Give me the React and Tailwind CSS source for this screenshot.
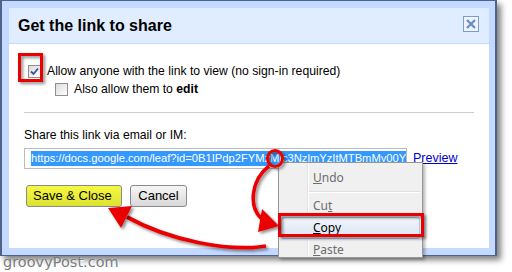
import React from 'react'

const URL_TEXT = 'https://docs.google.com/leaf?id=0B1IPdp2FYMzMjc3NzlmYzItMTBmMy00Y'

function Checkbox({ checked }) {
  return (
    <span className="w-[13px] h-[13px] shrink-0 border border-[#8f8f8f] bg-gradient-to-br from-[#dcdcdc] to-[#ffffff] flex items-center justify-center">
      {checked && (
        <svg width="9" height="9" viewBox="0 0 9 9">
          <path d="M1 4.5 L3.5 7 L8 1.5" fill="none" stroke="#3550a0" strokeWidth="1.8" />
        </svg>
      )}
    </span>
  )
}

function MenuItem({ label, u, active }) {
  const i = label.indexOf(u)
  return (
    <div
      className={`h-[22px] mx-[2px] pl-[31px] flex items-center border rounded-[3px] ${
        active
          ? 'bg-gradient-to-b from-[#f1f5fb] to-[#dae5f3] border-[#a9c6ea] text-black'
          : 'border-transparent text-[#6d6d6d]'
      }`}
    >
      {label.slice(0, i)}
      <span className="underline">{u}</span>
      {label.slice(i + 1)}
    </div>
  )
}

export default function App() {
  return (
    <div className="relative w-[512px] h-[272px] bg-white overflow-hidden font-['Liberation_Sans',Arial,sans-serif] text-black">
      {/* dialog frame */}
      <div className="w-[497px] h-[256px] bg-[#c3d9ff] border-x-2 border-t border-b border-[#4f6289] pt-[7px] pb-[7px] pl-[7px] pr-[6px] shadow-[4px_4px_6px_rgba(0,0,0,0.5)]">
        <div className="h-full bg-white flex flex-col">
          {/* header */}
          <div className="h-[36px] shrink-0 bg-[#e0ecff] border-b border-[#c3d9ff] flex justify-between pl-[9px] pr-[10px]">
            <div className="text-[16px] font-bold leading-[36px]">Get the link to share</div>
            <div className="mt-[8px] w-[16px] h-[16px] border border-[#7f9dc4] bg-[#eef4fd] flex items-center justify-center">
              <svg width="12" height="12" viewBox="0 0 12 12">
                <path d="M2 2 L10 10 M10 2 L2 10" stroke="#6d8fc0" strokeWidth="2.4" />
              </svg>
            </div>
          </div>

          {/* body */}
          <div className="flex flex-col px-[15px] pt-[19px] text-[12.2px]">
            <div className="h-[16px] flex items-center pl-[4px] gap-[6px]">
              <Checkbox checked />
              <span>Allow anyone with the link to view (no sign-in required)</span>
            </div>
            <div className="h-[16px] mt-[2px] flex items-center pl-[31px] gap-[6px]">
              <Checkbox />
              <span>
                Also allow them to <b>edit</b>
              </span>
            </div>
            <div className="h-px bg-[#cccccc] mt-[15px]" />
            <div className="h-[16px] mt-[14px] flex items-center">Share this link via email or IM:</div>
            <div className="mt-[5px] flex items-center gap-[6px]">
              <div className="w-[383px] h-[21px] shrink-0 border border-[#bcbcbc] flex items-center pl-[6px] overflow-hidden whitespace-nowrap text-[11.2px]">
                <span className="bg-[#3399ff] text-white leading-[15px] pr-[1px]">{URL_TEXT}</span>
              </div>
              <span className="text-[#0000cc] underline text-[12.5px]">Preview</span>
            </div>
            <div className="mt-[16px] flex gap-[8px] pl-[2px] text-[13px]">
              <div className="h-[22px] w-[96px] border border-[#8a8a8a] rounded-[3px] bg-gradient-to-b from-[#f6f840] to-[#dde233] flex items-center pl-[6px]">
                Save &amp; Close
              </div>
              <div className="h-[22px] w-[57px] border border-[#8a8a8a] rounded-[3px] bg-gradient-to-b from-[#f6f6f6] to-[#d9d9d9] flex items-center justify-center">
                Cancel
              </div>
            </div>
          </div>
        </div>
      </div>

      {/* watermark */}
      <div className="absolute left-[3px] top-[252px] text-[14.5px] font-['DejaVu_Sans',sans-serif] text-[#7c7c7c] [text-shadow:1px_1px_1px_#ffffff]">
        groovyPost.com
      </div>

      {/* context menu */}
      <div className="absolute left-[278px] top-[162px] w-[145px] h-[96px] bg-[#f0f0f0] border border-[#979797] shadow-[2px_2px_3px_rgba(0,0,0,0.3)] overflow-hidden font-['Noto_Sans',sans-serif] text-[12px]">
        <div className="absolute left-[28px] top-0 bottom-0 w-px bg-[#e2e3e3]" />
        <div className="absolute left-[29px] top-0 bottom-0 w-px bg-white" />
        <div className="relative pt-[4px]">
          <MenuItem label="Undo" u="U" />
          <div className="h-[6px] ml-[30px] mr-[2px] flex flex-col justify-center">
            <div className="h-px bg-[#e0e0e0]" />
            <div className="h-px bg-white" />
          </div>
          <MenuItem label="Cut" u="t" />
          <MenuItem label="Copy" u="C" active />
          <MenuItem label="Paste" u="P" />
        </div>
      </div>

      {/* red annotations */}
      <svg className="absolute inset-0 pointer-events-none" width="512" height="272" viewBox="0 0 512 272">
        <defs>
          <filter id="sh" x="-20%" y="-20%" width="140%" height="140%">
            <feDropShadow dx="2" dy="2" stdDeviation="1.6" floodColor="#000" floodOpacity="0.45" />
          </filter>
        </defs>
        <g filter="url(#sh)" fill="none" stroke="#ea0000" strokeWidth="3">
          <rect x="19.5" y="54.5" width="22" height="26" />
          <rect x="279.5" y="214.5" width="143" height="21" />
          <ellipse cx="275" cy="158.5" rx="7.5" ry="8" />
          <path d="M269 166 C251 180, 248 207, 262 219" strokeWidth="3.5" />
          <path d="M266 246 C230 252, 170 241, 127 217" strokeWidth="3.8" />
        </g>
        <g filter="url(#sh)" fill="#ea0000">
          <polygon points="279,226 262,209 258,232" />
          <polygon points="108,208 132,206 121,228" />
        </g>
      </svg>
    </div>
  )
}
